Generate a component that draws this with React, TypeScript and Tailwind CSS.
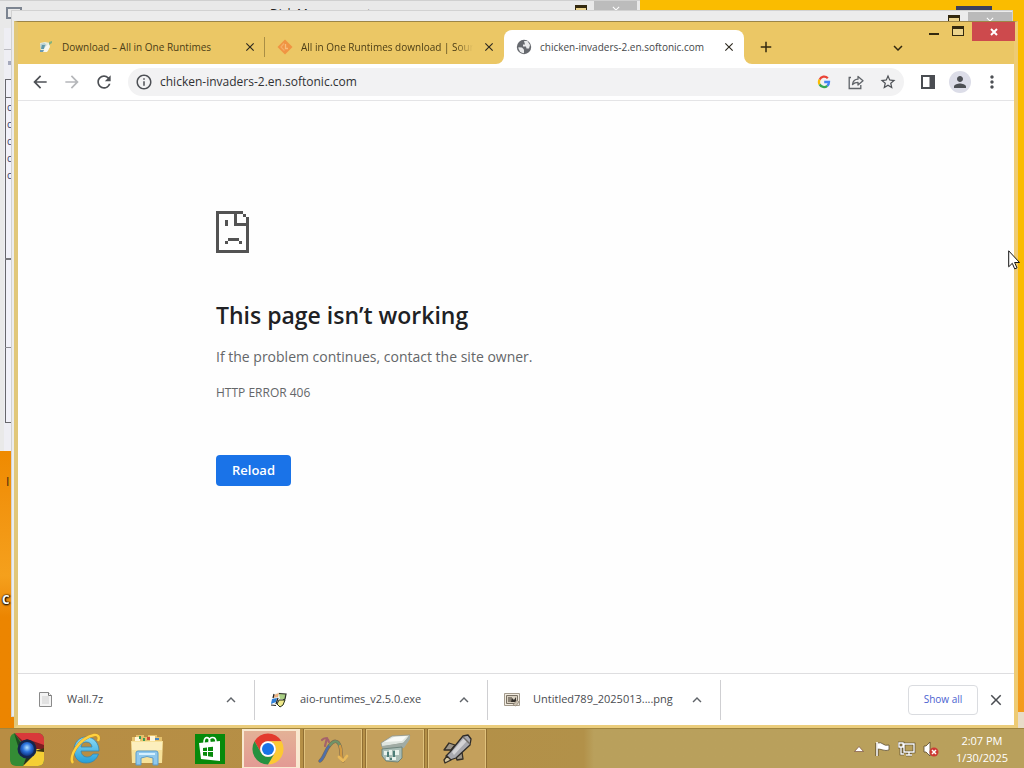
import type { ReactNode } from "react";
import {
  MdAdd,
  MdArrowBack,
  MdArrowForward,
  MdClose,
  MdExpandLess,
  MdExpandMore,
  MdInfoOutline,
  MdMoreVert,
  MdPerson,
  MdRefresh,
  MdStarBorder,
} from "react-icons/md";

/* ---------- small drawings ---------- */

function RestoreGlyph() {
  return (
    <svg width="12" height="10" viewBox="0 0 12 10" className="block" aria-hidden="true" shapeRendering="crispEdges">
      <path d="M0 0h12v10H0z" fill="#33290f" />
      <path d="M1 3h10v6H1z" fill="#ecd48c" />
    </svg>
  );
}

function GlobeIcon() {
  return (
    <svg width="16" height="16" viewBox="0 0 16 16" className="shrink-0" aria-hidden="true">
      <circle cx="8" cy="8" r="7.200" fill="#66696e" />
      <path d="M2.300 8.300L6 8.500l2 2v3.700A6 6 0 0 1 2.300 8.300z" fill="#e9eaeb" />
      <path d="M8 2h3.500l2.500 4-1 3.500h-2.500L10 7.500H7V5.500h2z" fill="#e9eaeb" />
    </svg>
  );
}

function GoogleG() {
  return (
    <svg width="14" height="14" viewBox="0 0 14 14" fill="none" strokeWidth="2.300" aria-hidden="true">
      <path d="M10.800 3.200A5 5 0 0 0 2.600 4.600" stroke="#ea4335" />
      <path d="M2.600 4.600a5 5 0 0 0 0 4.800" stroke="#fbbc05" />
      <path d="M2.600 9.400a5 5 0 0 0 7.700 1.400" stroke="#34a853" />
      <path d="M10.300 10.800A5 5 0 0 0 12 7H7.200" stroke="#4285f4" />
    </svg>
  );
}

function RuntimesFavicon() {
  return (
    <svg width="16" height="16" viewBox="0 0 16 16" className="shrink-0" aria-hidden="true">
      <path d="M2 4l5-1 5 1-2 8-7 1z" fill="#e3ebdf" />
      <path d="M2.500 5l4-1 2 2-2 3-4 0z" fill="#b9cfd0" />
      <path d="M4 6h3l-1 4H3z" fill="#5f97a8" />
      <path d="M7 8l4-3 1 3-3 5H5z" fill="#f7f7ee" />
      <path d="M2 11h4l-1 2H2z" fill="#6d9ab0" />
      <path d="M11 3l3-1v2l-3 2z" fill="#86b27c" />
    </svg>
  );
}

function SourceforgeFavicon() {
  return (
    <svg width="16" height="16" viewBox="0 0 16 16" className="shrink-0" aria-hidden="true">
      <path d="M8 .5L15.500 8 8 15.500 .5 8z" fill="#f09443" />
      <path d="M7 4.500L4 8l3.500 3.500" fill="none" stroke="#f4ac66" strokeWidth="1.300" />
      <path d="M8.500 5v4.500H11" fill="none" stroke="#f7bd7c" strokeWidth="1.300" />
    </svg>
  );
}

function ShareIcon() {
  return (
    <svg width="16" height="16" viewBox="0 0 16 16" fill="none" stroke="#5f6368" strokeWidth="1.300" aria-hidden="true">
      <path d="M3 3.500H1.200v11h11.600V11" />
      <path d="M4.500 10.500C5 7 7 5.300 10 5.200V2.500l5 4.300-5 4.200V8.300C7.500 8.300 6 9 4.500 10.500z" strokeLinejoin="round" />
    </svg>
  );
}

function SidePanelIcon() {
  return (
    <svg width="16" height="16" viewBox="0 0 16 16" aria-hidden="true">
      <path d="M1 1h14v14H1z" fill="#4a4d52" />
      <path d="M3 3h6.500v10H3z" fill="#fff" />
    </svg>
  );
}

function SadPage() {
  return (
    <svg width="33" height="42" viewBox="0 0 99 126" fill="#535353" aria-hidden="true" shapeRendering="crispEdges">
      <path d="M0 0h81v9H0zM0 0h9v126H0zM0 117h99v9H0zM90 36h9v90h-9zM54 0h9v45h-9zM54 36h45v9H54zM81 9h9v9h-9zM90 18h9v18h-9z" />
      <path d="M27 27h9v18h-9zM36 81h33v9H36zM27 90h9v9h-9zM69 90h9v9h-9z" />
    </svg>
  );
}

function FileIcon() {
  return (
    <svg width="16" height="16" viewBox="0 0 16 16" className="shrink-0" aria-hidden="true">
      <path d="M1.500 .5h9l3 3v11h-12z" fill="#f4f4f4" stroke="#8a8a8a" />
      <path d="M10.500 .5v3h3" fill="#fff" stroke="#777" />
      <path d="M4 5h7M4 7h7M4 9h7M4 11h7" stroke="#cfcfcf" />
    </svg>
  );
}

function InstallerIcon() {
  return (
    <svg width="18" height="18" viewBox="0 0 18 18" className="shrink-0" aria-hidden="true">
      <path d="M4 3l5-2 7 2-1 8-3 4-8-2z" fill="#f2f5ee" />
      <path d="M4 4l5-2-1 4-5 1z" fill="#e8b184" />
      <path d="M9 3l7 0-1 5-5 0z" fill="#a9cf84" />
      <path d="M9 2.500l7 .5-1 5-2 1" fill="none" stroke="#2b2f28" strokeWidth="1.200" />
      <path d="M2 8l5-1-1 4-5 2z" fill="#2f7fd8" />
      <path d="M9 9l6 0-2 5-3 2-3-3z" fill="#efe98a" stroke="#26301a" strokeWidth="1" />
      <path d="M1 14l5 .5M8 7l-2 6M4 3L3 7" stroke="#222" strokeWidth="1.200" />
    </svg>
  );
}

function PictureIcon() {
  return (
    <svg width="16" height="16" viewBox="0 0 16 16" className="shrink-0" aria-hidden="true">
      <path d="M.5 1.500h15v12H.5z" fill="#f1ebe0" stroke="#a39a8c" />
      <path d="M2.500 3.500h11v8h-11z" fill="#d9d0c0" stroke="#7a7265" />
      <path d="M4 5h4v5H4z" fill="#8a8275" />
      <path d="M7 10l1-4 2 2 2-3v5z" fill="#34312d" />
      <path d="M9 13l4-5 2 2-3 4z" fill="#c9bfae" stroke="#8d8375" strokeWidth=".7" />
    </svg>
  );
}

function BrowserPlusIcon() {
  return (
    <svg width="34" height="34" viewBox="0 0 34 34" aria-hidden="true">
      <defs>
        <clipPath id="plusClip"><rect x="0" y="1" width="34" height="33" rx="6" /></clipPath>
        <radialGradient id="plusLens" cx=".5" cy=".4" r=".6">
          <stop offset="0" stopColor="#b5e2ff" />
          <stop offset=".5" stopColor="#2b72dc" />
          <stop offset="1" stopColor="#0e317c" />
        </radialGradient>
      </defs>
      <g clipPath="url(#plusClip)">
        <path d="M0 0h34v34H0z" fill="#348c35" />
        <path d="M4 0h30v17H17z" fill="#d9393a" />
        <path d="M4 1l9 8 4-2 17 6v4H17z" fill="#7e1d22" />
        <path d="M34 17v17H13l8-17z" fill="#f4cf35" />
        <path d="M34 16v4l-9-1z" fill="#3c3413" />
        <path d="M13 34l3-8 6-1z" fill="#24321d" />
        <path d="M4 1l7 10-3 3z" fill="#1d4c22" />
      </g>
      <circle cx="17" cy="17" r="9.500" fill="#14254c" />
      <circle cx="17" cy="17" r="7" fill="url(#plusLens)" />
    </svg>
  );
}

function ExplorerEIcon() {
  return (
    <svg width="34" height="34" viewBox="0 0 34 34" aria-hidden="true">
      <defs>
        <linearGradient id="eBlue" x1="0" y1="0" x2="0" y2="1">
          <stop offset="0" stopColor="#8cdcf5" />
          <stop offset="1" stopColor="#249ed8" />
        </linearGradient>
      </defs>
      <path d="M17 5C25 5 30 11 30 19H12c.5 4 3 6 6.500 6 2.500 0 4-1 5.500-3h5.500C27.500 28 23 31 17 31 9 31 5 25 5 18S10 5 17 5zm0 5c-3 0-4.800 2-5 5h11c-.2-3-2.500-5-6-5z" fill="url(#eBlue)" stroke="#3785ad" strokeWidth=".8" />
      <path d="M4 31C-1 25 10 6 25 3c4-.6 6 2 4 6" fill="none" stroke="#c08a25" strokeWidth="3" />
      <path d="M4 31C-1 25 10 6 25 3c4-.6 6 2 4 6" fill="none" stroke="#ffd13e" strokeWidth="2.400" />
    </svg>
  );
}

function FolderIcon() {
  return (
    <svg width="34" height="34" viewBox="0 0 34 34" aria-hidden="true">
      <path d="M2 5h4V3h8v2h4V3h9v2h5v25H2z" fill="#e5c16d" />
      <path d="M5 5h5v4H5zM20 4h5v5h-5z" fill="#fff6d7" />
      <path d="M9 4h2v3H9zM13 6h2v3h-2z" fill="#3d9b54" />
      <path d="M17 5h3v3h-3z" fill="#d14c36" />
      <path d="M25 6h4v2h-4z" fill="#4a85bd" />
      <path d="M1 9h32l-1 22H2z" fill="#f7e29a" />
      <path d="M2 10h30v8H2z" fill="#fcefbd" />
      <path d="M6 33V21q0-2 2-2h18q2 0 2 2v12h-5v-7q-6-3-12 0v7z" fill="#8fc8ec" stroke="#5a9bcb" />
      <path d="M9 22h16" stroke="#d5f0ff" strokeWidth="2" />
    </svg>
  );
}

function StoreIcon() {
  return (
    <svg width="30" height="30" viewBox="0 0 30 30" aria-hidden="true">
      <path d="M0 0h30v30H0z" fill="#078a0b" />
      <path d="M4 9l21-2v20L6 25z" fill="#fff" />
      <path d="M9 9c0-7 5-7 6-1M14 8c0-6 7-6 7 0" fill="none" stroke="#fff" strokeWidth="1.600" />
      <path d="M8 14l4-.5V17H8zM13 13.300l5-.6V17h-5zM8 18h4v4l-4-.5zM13 18h5v5l-5-.7z" fill="#078a0b" />
    </svg>
  );
}

function ChromeIcon() {
  return (
    <svg width="34" height="34" viewBox="0 0 48 48" aria-hidden="true">
      <path d="M4.950 13A22 22 0 0 1 43.050 13H24A11 11 0 0 0 14.470 29.500z" fill="#e33b2e" />
      <path d="M24 13h19.050A22 22 0 0 1 24 46l9.530-16.500A11 11 0 0 0 24 13z" fill="#fcc934" />
      <path d="M33.530 29.500L24 46A22 22 0 0 1 4.950 13l9.520 16.500A11 11 0 0 0 33.530 29.500z" fill="#26913f" />
      <circle cx="24" cy="24" r="11" fill="#fff" />
      <circle cx="24" cy="24" r="8.500" fill="#1a73e8" />
    </svg>
  );
}

function CurveIcon() {
  return (
    <svg width="34" height="34" viewBox="0 0 34 34" fill="none" aria-hidden="true" strokeLinecap="round">
      <path d="M4 29C9 25 9 18 14 13c4-5 8-5 10 1 2 5 0 11 3 15" stroke="#7d6b52" strokeWidth="3.500" />
      <path d="M4 29c5-4 5-11 9-15" stroke="#4f6fa8" strokeWidth="2.400" />
      <path d="M14 13c4-5 8-5 10 1" stroke="#6f9468" strokeWidth="2.400" />
      <path d="M24 14c2 5 0 11 3 15" stroke="#d29a42" strokeWidth="2.400" />
      <path d="M6 8c3-3 6-2 7 2M11 6l-2 8" stroke="#a5626a" strokeWidth="2.200" />
      <path d="M23 25l4 4 4-5" stroke="#e9b95a" strokeWidth="2.800" strokeLinejoin="round" />
    </svg>
  );
}

function DriveIcon() {
  return (
    <svg width="34" height="34" viewBox="0 0 34 34" aria-hidden="true">
      <path d="M3 11L14 4l18-1-6 8-22 4z" fill="#dfe5df" stroke="#8d938c" strokeWidth=".8" />
      <path d="M6 10l10-5 13-1-5 5z" fill="#f8faf7" />
      <path d="M4 14l21-3 7-8v4l-6 9-21 2z" fill="#a0aba4" />
      <path d="M4 17l20-2v11l-4 4-12-1-4-5z" fill="#a9bdb6" stroke="#617871" strokeWidth=".8" />
      <path d="M6 19h3v4H6zM11 18h3v5h-3zM17 18h4v5h-4zM8 25h3v3H8zM14 25h4v3h-4z" fill="#e8f2ec" />
      <path d="M9 20h2v5H9zM15 19h2v6h-2zM12 26h2v2h-2z" fill="#4c7d77" />
    </svg>
  );
}

function RocketIcon() {
  return (
    <svg width="34" height="34" viewBox="0 0 34 34" aria-hidden="true" strokeLinejoin="round">
      <path d="M15 13l-6-2-5 7 7 0zM22 20l1 7-6 1-1-3z" fill="#9d9588" stroke="#342e27" strokeWidth="1.300" />
      <path d="M10 20L23 4l5-1 3 4-1 6-14 13-6 2-4-4z" fill="#a8a8ae" stroke="#2e2b29" strokeWidth="1.300" />
      <path d="M12 20L24 6l3 3-13 14z" fill="#d3d2d5" />
      <path d="M23 5l7 7" stroke="#6f6a66" strokeWidth="1.400" />
      <path d="M7 24l4 4-6 3-1-3z" fill="#d5c6a0" stroke="#342e27" strokeWidth="1.300" />
    </svg>
  );
}

function FlagIcon() {
  return (
    <svg width="18" height="18" viewBox="0 0 18 18" aria-hidden="true">
      <path d="M3 3v13" stroke="#463b22" strokeWidth="3" />
      <path d="M3 3q4-1 6 1t6 1v5q-3 1-6 0t-6-1z" fill="#fff" stroke="#5f5135" strokeWidth=".8" />
      <path d="M3 2v14" stroke="#fff" strokeWidth="1.600" />
    </svg>
  );
}

function NetworkIcon() {
  return (
    <svg width="18" height="18" viewBox="0 0 18 18" aria-hidden="true" fill="none">
      <path d="M6 4h10v8H6zM8 15h6M11 12v3M1 3h4v4H1zM3 7v7h3" stroke="#463b22" strokeWidth="2.600" />
      <path d="M6 4h10v8H6zM8 15h6M11 12v3M1 3h4v4H1zM3 7v7h3" stroke="#fff" strokeWidth="1.400" />
    </svg>
  );
}

function MutedIcon() {
  return (
    <svg width="18" height="18" viewBox="0 0 18 18" aria-hidden="true">
      <path d="M2 6h2l4-4v14l-4-4H2z" fill="#fff" stroke="#59492d" strokeWidth=".8" />
      <circle cx="12" cy="12" r="4.500" fill="#cd3a34" />
      <path d="M10 10l4 4M14 10l-4 4" stroke="#fff" strokeWidth="1.500" />
    </svg>
  );
}

function Pointer() {
  return (
    <svg width="12" height="20" viewBox="0 0 12 20" aria-hidden="true">
      <path d="M.7.800v16l3.600-3.500 2.400 5.600 2.300-1-2.400-5.400h4.900z" fill="#fff" stroke="#141414" />
    </svg>
  );
}

/* ---------- windows behind the browser ---------- */

const rowMarks = ["top-[100px]", "top-[117px]", "top-[134px]", "top-[151px]", "top-[168px]"];

function BackgroundWindows() {
  return (
    <>
      <div className="absolute top-0 left-0 h-[451px] w-[640px] overflow-hidden border-t border-[#d0d0d0] bg-[#e9e9e9] text-[#222]">
        <div className="absolute top-[5px] left-[270px] text-xs leading-4">Disk Management</div>
        <div className="absolute top-[4px] left-[575px]"><RestoreGlyph /></div>
        <div className="absolute top-0 left-[594px] flex h-5 w-[43px] justify-center bg-[#bcbcbc] pt-[3px] text-white">
          <MdClose size={12} />
        </div>
        <div className="absolute top-[27px] left-1 h-[424px] w-4 bg-[#eeeef4]" />
        <div className="absolute top-[6px] left-[6px] h-3 w-4 border-2 border-[#7c8490]" />
        <div className="absolute top-[48px] left-1 h-px w-3 bg-[#bbbbc2]" />
        <div className="absolute top-[60px] left-2 h-1 w-1 bg-[#a5a9bc]" />
        <div className="absolute top-[78px] left-[5px] h-[344px] w-4 border border-r-0 border-[#67676c] bg-[#f2f2fa]" />
        <div className="absolute top-[96px] left-[5px] h-px w-4 bg-[#67676c]" />
        <div className="absolute top-[257px] left-[5px] h-[2px] w-4 bg-[#77777c]" />
        <div className="absolute top-[346px] left-[5px] h-px w-4 bg-[#8b8b92]" />
        {rowMarks.map((top) => (
          <div key={top} className={`absolute left-[7px] text-[10px] leading-3 text-[#3c3c66] ${top}`}>c</div>
        ))}
      </div>
      <div className="absolute top-[10px] right-[11px] bottom-[11px] left-[11px] overflow-hidden border border-[#d2d2d2] bg-[#ececec]">
        <div className="absolute top-1 right-[52px]"><RestoreGlyph /></div>
        <div className="absolute top-[1px] right-0 flex h-5 w-[44px] justify-center bg-[#bababa] pt-[3px] text-white">
          <MdClose size={12} />
        </div>
      </div>
      <div className="absolute top-[6px] right-8 h-1 w-9 bg-[#3b3f5c]" />
      <div className="absolute top-[474px] left-[6px] text-xs leading-4 text-[#3b2a10]">I</div>
      <div className="absolute top-[592px] left-[2px] text-xs leading-4 font-bold text-white [text-shadow:0_0_2px_#000,0_1px_2px_#000,1px_0_1px_#000]">C</div>
    </>
  );
}

/* ---------- browser ---------- */

type TabProps = { title: string; icon: ReactNode; active?: boolean; divider?: boolean; fade?: boolean };

function Tab({ title, icon, active, divider, fade }: TabProps) {
  return (
    <div
      className={`relative flex h-[34px] items-center gap-2 pr-[7px] pl-3 text-[10px] ${
        active ? "w-[240px] rounded-t-lg bg-white text-[#45474a]" : "w-[239px] text-[#4b3d16]"
      }`}
    >
      {active && (
        <>
          <svg width="8" height="8" viewBox="0 0 8 8" className="absolute bottom-0 -left-2" aria-hidden="true">
            <path d="M8 0v8H0a8 8 0 0 0 8-8z" fill="#fff" />
          </svg>
          <svg width="8" height="8" viewBox="0 0 8 8" className="absolute -right-2 bottom-0" aria-hidden="true">
            <path d="M0 0v8h8a8 8 0 0 1-8-8z" fill="#fff" />
          </svg>
        </>
      )}
      {icon}
      <div
        className={`min-w-0 flex-1 leading-4 whitespace-nowrap ${
          fade ? "[mask-image:linear-gradient(to_right,black_90%,transparent)]" : ""
        }`}
      >
        {title}
      </div>
      <button type="button" aria-label={`Close ${title}`} className="flex h-4 w-4 items-center justify-center text-[#2e2a20]">
        <MdClose size={14} />
      </button>
      {divider && <div className="absolute right-0 h-5 w-px bg-[#a98e45]" />}
    </div>
  );
}

function TitleBar() {
  return (
    <header className="flex h-[42px] items-start justify-between bg-[#ebc765] pl-2">
      <div className="flex min-w-0 items-center pt-2">
        <Tab title="Download – All in One Runtimes" icon={<RuntimesFavicon />} divider />
        <Tab title="All in One Runtimes download | Sourc" icon={<SourceforgeFavicon />} fade />
        <Tab title="chicken-invaders-2.en.softonic.com" icon={<GlobeIcon />} active />
        <button type="button" aria-label="New tab" className="ml-3 flex h-5 w-5 items-center justify-center text-[#33290f]">
          <MdAdd size={18} />
        </button>
      </div>
      <div className="flex items-start text-[#33290f]">
        <button type="button" aria-label="Search tabs" className="mt-4 mr-4 flex h-5 w-5 items-center justify-center">
          <MdExpandMore size={18} />
        </button>
        <button type="button" aria-label="Minimize" className="flex h-6 w-5 items-center justify-center">
          <span className="h-[2px] w-[10px] bg-[#33290f]" />
        </button>
        <button type="button" aria-label="Maximize" className="mr-1 ml-1 flex h-[18px] w-5 items-center justify-center">
          <RestoreGlyph />
        </button>
        <button type="button" aria-label="Close window" className="-mr-px flex h-[19px] w-[43px] items-center justify-center bg-[#cd4a4d] text-white">
          <svg width="8" height="8" viewBox="0 0 8 8" aria-hidden="true">
            <path d="M1 1l6 6M7 1L1 7" stroke="currentColor" strokeWidth="2" />
          </svg>
        </button>
      </div>
    </header>
  );
}

function IconButton({ label, children }: { label: string; children: ReactNode }) {
  return (
    <button type="button" aria-label={label} className="flex h-7 w-8 shrink-0 items-center justify-center text-[#4d5055]">
      {children}
    </button>
  );
}

function Toolbar() {
  return (
    <div className="flex h-[37px] items-center border-b border-[#e4e4e6] bg-white px-[6px]">
      <IconButton label="Back"><MdArrowBack size={20} /></IconButton>
      <IconButton label="Forward"><MdArrowForward size={20} className="text-[#b5b7ba]" /></IconButton>
      <IconButton label="Reload page"><MdRefresh size={20} /></IconButton>
      <div className="mx-2 flex h-7 min-w-0 flex-1 items-center rounded-full bg-[#f2f2f3]">
        <IconButton label="Site information"><MdInfoOutline size={18} /></IconButton>
        <input
          type="text"
          aria-label="Address"
          defaultValue="chicken-invaders-2.en.softonic.com"
          className="min-w-0 flex-1 bg-transparent text-xs leading-5 text-[#303134] outline-none"
        />
        <IconButton label="Search with Google"><GoogleG /></IconButton>
        <IconButton label="Share"><ShareIcon /></IconButton>
        <IconButton label="Bookmark"><MdStarBorder size={18} /></IconButton>
      </div>
      <IconButton label="Side panel"><SidePanelIcon /></IconButton>
      <IconButton label="Profile">
        <span className="flex h-[22px] w-[22px] items-center justify-center rounded-full bg-[#dcdde8]">
          <MdPerson size={18} />
        </span>
      </IconButton>
      <IconButton label="Menu"><MdMoreVert size={20} /></IconButton>
    </div>
  );
}

function ErrorPage() {
  return (
    <main className="flex-1 bg-[#fefefe]">
      <div className="mx-auto w-full max-w-[600px] pt-[110px] text-[#646669]">
        <SadPage />
        <h1 className="mt-[46px] text-[23px] leading-8 font-semibold text-[#202124]">This page isn’t working</h1>
        <p className="mt-4 text-sm leading-5">If the problem continues, contact the site owner.</p>
        <p className="mt-4 text-xs leading-5">HTTP ERROR 406</p>
        <button
          type="button"
          className="mt-[52px] h-[31px] rounded-[4px] bg-[#1a73e8] px-4 text-[13px] font-semibold text-white"
        >
          Reload
        </button>
      </div>
    </main>
  );
}

function DownloadItem({ name, icon }: { name: string; icon: ReactNode }) {
  return (
    <div className="flex h-10 w-[233px] items-center border-r border-[#cfcfd2] pr-[14px] pl-4">
      <div className="flex w-4 shrink-0 justify-center">{icon}</div>
      <a href="#" className="min-w-0 flex-1 truncate pl-[13px] text-[#4a4c50]">{name}</a>
      <button type="button" aria-label={`Options for ${name}`} className="flex h-5 w-[18px] items-center justify-center text-[#5f6368]">
        <MdExpandLess size={18} />
      </button>
    </div>
  );
}

function DownloadBar() {
  return (
    <div className="flex h-[52px] items-center border-t border-[#dedee0] bg-white pr-2 pl-1 text-[11px]">
      <DownloadItem name="Wall.7z" icon={<FileIcon />} />
      <DownloadItem name="aio-runtimes_v2.5.0.exe" icon={<InstallerIcon />} />
      <DownloadItem name="Untitled789_2025013....png" icon={<PictureIcon />} />
      <button type="button" className="ml-auto h-[30px] w-[70px] rounded-[4px] border border-[#dadce0] text-[10px] text-[#4a62d0]">
        Show all
      </button>
      <button type="button" aria-label="Close downloads bar" className="ml-2 flex h-5 w-5 items-center justify-center text-[#4a4d52]">
        <MdClose size={18} />
      </button>
    </div>
  );
}

/* ---------- taskbar ---------- */

function Pinned({ label, children }: { label: string; children: ReactNode }) {
  return (
    <button type="button" aria-label={label} className="flex h-10 w-[61px] items-center justify-center">
      {children}
    </button>
  );
}

function Running({ label, active, children }: { label: string; active?: boolean; children: ReactNode }) {
  return (
    <button
      type="button"
      aria-label={label}
      className={`flex h-10 w-[58px] items-center justify-center border ${
        active
          ? "border-2 border-r-4 border-[#f9e8d0] bg-linear-to-b from-[#e3b196] to-[#e39a94] pr-1"
          : "border-[#e0c27c] bg-[#c4a05c] outline outline-[#916f33]"
      }`}
    >
      {children}
    </button>
  );
}

function Taskbar() {
  return (
    <footer className="relative flex h-10 items-center justify-between overflow-hidden border-t border-[#a0853f] bg-linear-to-r from-[#b88d43] from-0% via-[#b29149] via-57% to-[#b9a05c] to-58%">
      <div className="flex items-center">
        <nav className="flex items-center pr-1" aria-label="Pinned programs">
          <Pinned label="Browser Plus"><span className="mr-2"><BrowserPlusIcon /></span></Pinned>
          <Pinned label="Internet Explorer"><span className="mr-3"><ExplorerEIcon /></span></Pinned>
          <Pinned label="File Explorer"><span className="mr-3"><FolderIcon /></span></Pinned>
          <Pinned label="Store"><span className="mr-2"><StoreIcon /></span></Pinned>
        </nav>
        <div className="-ml-[6px] flex items-center gap-1">
          <Running label="Chrome" active><ChromeIcon /></Running>
          <Running label="Curves"><CurveIcon /></Running>
          <Running label="Disk Management"><DriveIcon /></Running>
          <Running label="Rocket"><RocketIcon /></Running>
        </div>
      </div>
      <div className="flex items-center gap-[6px] pr-4 text-white">
        <svg width="10" height="6" viewBox="0 0 10 6" className="mr-1" aria-label="Show hidden icons">
          <path d="M5 .5L9.500 5.500h-9z" fill="#fff" stroke="#7b5140" strokeWidth=".7" />
        </svg>
        <FlagIcon />
        <NetworkIcon />
        <MutedIcon />
        <time className="ml-[10px] text-center text-[11px] leading-[17px]">
          <span className="block">2:07 PM</span>
          <span className="block">1/30/2025</span>
        </time>
      </div>
    </footer>
  );
}

export default function App() {
  return (
    <div className="flex min-h-screen flex-col bg-[#fabc00] font-['Open_Sans','Noto_Sans',sans-serif]">
      <div className="relative flex flex-1 flex-col pt-[21px] pr-[6px] pl-[14px]">
        <div className="absolute top-[451px] bottom-0 left-0 w-4 bg-linear-to-b from-[#ef8a00] via-[#f5a01c] via-45% to-[#ec8500] to-60%" />
        <div className="absolute right-0 bottom-[15px] h-[340px] w-[6px] bg-linear-to-b from-[#fabc00] to-[#f39a1c]" />
        <div className="absolute right-0 bottom-0 h-4 w-[6px] bg-[#e8dcc8]" />
        <BackgroundWindows />
        <section
          aria-label="Browser"
          className="relative flex flex-1 flex-col border-x-4 border-t border-b-[3px] border-t-[#9c8547] border-r-[#eecb73] border-b-[#ebcd7c] border-l-[#e1c779]"
        >
          <TitleBar />
          <Toolbar />
          <ErrorPage />
          <DownloadBar />
        </section>
        <div className="absolute top-[250px] right-1"><Pointer /></div>
      </div>
      <Taskbar />
    </div>
  );
}
